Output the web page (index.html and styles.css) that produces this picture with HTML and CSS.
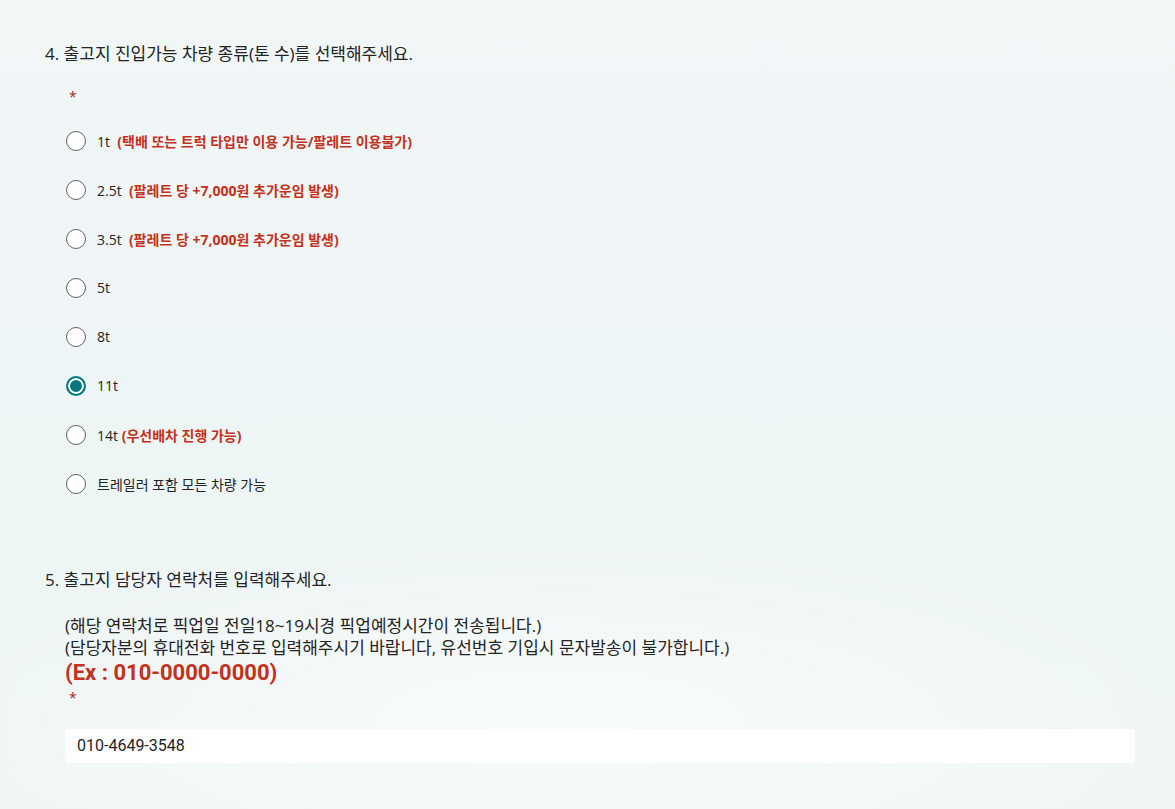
FILE: index.html
```html
<!DOCTYPE html>
<html lang="ko">
<head>
<meta charset="utf-8">
<title>출고지 정보</title>
<link rel="stylesheet" href="styles.css">
</head>
<body>
<div class="page">

  <div class="question">
    <div class="q-title">4. 출고지 진입가능 차량 종류(톤 수)를 선택해주세요.</div>
    <div class="required">*</div>
    <div class="choices">
      <label class="choice"><span class="radio"></span><span class="c-text">1t&nbsp; <b class="warn">(택배 또는 트럭 타입만 이용 가능/팔레트 이용불가)</b></span></label>
      <label class="choice"><span class="radio"></span><span class="c-text">2.5t&nbsp; <b class="warn">(팔레트 당 +7,000원 추가운임 발생)</b></span></label>
      <label class="choice"><span class="radio"></span><span class="c-text">3.5t&nbsp; <b class="warn">(팔레트 당 +7,000원 추가운임 발생)</b></span></label>
      <label class="choice"><span class="radio"></span><span class="c-text">5t</span></label>
      <label class="choice"><span class="radio"></span><span class="c-text">8t</span></label>
      <label class="choice"><span class="radio checked"></span><span class="c-text">11t</span></label>
      <label class="choice"><span class="radio"></span><span class="c-text">14t <b class="warn">(우선배차 진행 가능)</b></span></label>
      <label class="choice"><span class="radio"></span><span class="c-text">트레일러 포함 모든 차량 가능</span></label>
    </div>
  </div>

  <div class="question q5">
    <div class="q-title">5. 출고지 담당자 연락처를 입력해주세요.</div>
    <div class="q-desc">
      <p>(해당 연락처로 픽업일 전일18~19시경 픽업예정시간이 전송됩니다.)</p>
      <p>(담당자분의 휴대전화 번호로 입력해주시기 바랍니다, 유선번호 기입시 문자발송이 불가합니다.)</p>
      <p class="example">(Ex : 010-0000-0000)</p>
    </div>
    <div class="required">*</div>
    <div class="answer">010-4649-3548</div>
  </div>

</div>
</body>
</html>
```

FILE: styles.css
```css
html, body {
  margin: 0;
  height: 100%;
}

body {
  font-family: "Open Sans", "Noto Sans CJK KR", sans-serif;
  color: #242424;
  background:
    radial-gradient(ellipse 900px 260px at 560px 720px, rgba(255,255,255,0.55), rgba(255,255,255,0) 70%),
    linear-gradient(180deg, #f1f6f7 0%, #eef5f5 60%, #f0f6f6 100%);
  overflow: hidden;
}

.page {
  padding: 42px 40px 0 45px;
}

.q-title {
  font-size: 17px;
  line-height: 24px;
}

.required {
  color: #a4262c;
  font-size: 14px;
  line-height: 20px;
  margin-top: 21px;
  padding-left: 24px;
}

.choices {
  margin-top: 9px;
  padding-left: 21px;
  display: flex;
  flex-direction: column;
}

.choice {
  height: 49px;
  display: flex;
  align-items: center;
  gap: 11px;
  font-size: 14px;
}

.radio {
  width: 20px;
  height: 20px;
  box-sizing: border-box;
  border: 1px solid #616161;
  border-radius: 50%;
  background: #fff;
  flex: none;
}

.radio.checked {
  border: 2px solid #03787c;
  background: #03787c;
  box-shadow: inset 0 0 0 2px #fff;
}

.warn {
  color: #c3311c;
  font-weight: 700;
}

.q5 {
  margin-top: 60px;
}

.q-desc {
  margin-top: 23px;
  padding-left: 20px;
  font-size: 17px;
  line-height: 22px;
}

.q-desc p {
  margin: 0;
}

.q-desc .example {
  margin-top: 1px;
  color: #c3311c;
  font-family: "Roboto", "Noto Sans CJK KR", sans-serif;
  font-weight: 700;
  font-size: 22px;
  line-height: 26px;
}

.q5 .required {
  margin-top: 2px;
}

.answer {
  margin: 21px 0 0 20px;
  width: 1070px;
  height: 34px;
  box-sizing: border-box;
  padding: 0 12px;
  background: #fff;
  border-radius: 4px;
  font-family: "Roboto", "Noto Sans CJK KR", sans-serif;
  font-size: 16px;
  line-height: 34px;
}
```
